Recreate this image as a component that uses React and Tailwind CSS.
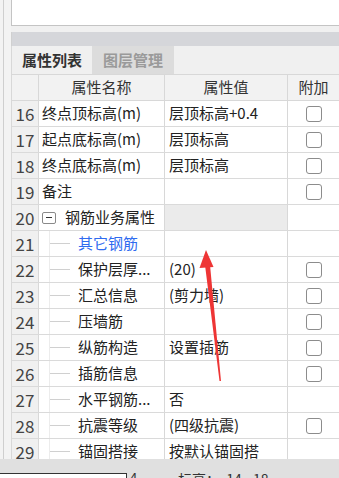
import React from "react";

const rows = [
  { n: 16, name: "终点顶标高(m)", val: "层顶标高+0.4", cb: true },
  { n: 17, name: "起点底标高(m)", val: "层顶标高", cb: true },
  { n: 18, name: "终点底标高(m)", val: "层顶标高", cb: true },
  { n: 19, name: "备注", val: "", cb: true },
  { n: 20, name: "钢筋业务属性", val: "", cb: false, group: true },
  { n: 21, name: "其它钢筋", val: "", cb: false, tree: true, blue: true },
  { n: 22, name: "保护层厚...", val: "(20)", cb: true, tree: true },
  { n: 23, name: "汇总信息", val: "(剪力墙)", cb: true, tree: true },
  { n: 24, name: "压墙筋", val: "", cb: true, tree: true },
  { n: 25, name: "纵筋构造", val: "设置插筋", cb: true, tree: true },
  { n: 26, name: "插筋信息", val: "", cb: true, tree: true },
  { n: 27, name: "水平钢筋...", val: "否", cb: false, tree: true },
  { n: 28, name: "抗震等级", val: "(四级抗震)", cb: true, tree: true },
  { n: 29, name: "锚固搭接", val: "按默认锚固搭", cb: false, tree: true },
];

const font = { fontFamily: '"Noto Sans CJK SC", "Noto Sans", sans-serif' };

function Checkbox() {
  return <div className="w-[16px] h-[16px] rounded-[3px] border border-[#8c8c8c] bg-white" />;
}

export default function App() {
  return (
    <div className="relative w-[339px] h-[478px] overflow-hidden bg-[#f0f0f0] text-[#222]" style={font}>
      <div className="flex h-[459px]">
        {/* left strip */}
        <div className="w-[11px] flex shrink-0 bg-[#f3f3f3]">
          <div className="w-[3px]" />
          <div className="w-px bg-[#cfcfcf]" />
        </div>
        {/* main */}
        <div className="flex-1 flex flex-col min-w-0">
          <div className="h-[26px] shrink-0 bg-white border-l border-b border-[#c4c4c4]" />
          <div className="h-[6px] shrink-0 bg-[#f0f0f0]" />
          <div className="h-[14px] shrink-0 bg-[#d5d6da] border-l border-[#d0d0d0]" />
          {/* tabs */}
          <div className="h-[28px] shrink-0 flex bg-[#f0f0f0] border-l border-[#d8d8d8]">
            <div className="w-[80px] flex items-center justify-center text-[15px] font-bold text-[#333] bg-[#f0f0f0]">
              属性列表
            </div>
            <div className="w-[82px] flex items-center justify-center text-[15px] font-bold text-[#9a9a9a] bg-[#dcdcdc]">
              图层管理
            </div>
          </div>
          {/* header */}
          <div className="h-[27px] shrink-0 flex bg-[#f2f2f2] border-l border-b border-t border-[#d8d8d8] text-[15px] text-[#333]">
            <div className="w-[27px] border-r border-[#d8d8d8]" />
            <div className="w-[126px] border-r border-[#d8d8d8] flex items-center justify-center">属性名称</div>
            <div className="w-[123px] border-r border-[#d8d8d8] flex items-center justify-center">属性值</div>
            <div className="flex-1 flex items-center justify-center">附加</div>
          </div>
          {/* rows */}
          <div className="flex flex-col border-l border-[#d8d8d8] bg-white">
            {rows.map((r) => (
              <div key={r.n} className="h-[26px] shrink-0 flex border-b border-[#dadada] text-[15px]">
                <div className="w-[27px] bg-[#f0f0f0] border-r border-[#d8d8d8] flex items-center justify-center text-[17px] text-[#444]">
                  {r.n}
                </div>
                <div className="relative w-[126px] border-r border-[#d8d8d8] flex items-center overflow-hidden whitespace-nowrap bg-white">
                  {r.group && (
                    <>
                      <div className="ml-[3px] w-[14px] h-[12px] border border-[#8a8a8a] rounded-[2px] bg-white flex items-center justify-center">
                        <div className="w-[6px] h-px bg-[#333]" />
                      </div>
                      <span className="ml-[9px]">{r.name}</span>
                    </>
                  )}
                  {r.tree && (
                    <>
                      <div className="absolute left-[10px] top-0 bottom-0 w-px bg-[#ececec]" />
                      <div className="ml-[11px] w-[20px] h-px bg-[#d0d0d0]" />
                      <span className={"ml-[8px] " + (r.blue ? "text-[#2f6bf0]" : "")}>{r.name}</span>
                    </>
                  )}
                  {!r.group && !r.tree && <span className="ml-[3px]">{r.name}</span>}
                </div>
                <div
                  className={
                    "w-[123px] border-r border-[#d8d8d8] flex items-center pl-[4px] overflow-hidden whitespace-nowrap " +
                    (r.group ? "bg-[#ebebeb]" : "bg-white")
                  }
                >
                  {r.val}
                </div>
                <div className="flex-1 flex items-center justify-center pl-[1px]">
                  {r.cb && <Checkbox />}
                </div>
              </div>
            ))}
          </div>
        </div>
      </div>
      {/* bottom bar */}
      <div className="relative h-[19px] bg-[#e0e0e0] overflow-hidden">
        <div className="absolute left-0 top-[14px] w-[127px] h-[10px] bg-white border-t border-r border-[#333]" />
        <div className="absolute left-[130px] top-[12px] text-[13px] leading-[14px] text-[#333]">4</div>
        <div className="absolute left-[178px] top-[12px] text-[14px] leading-[16px] text-[#333] whitespace-nowrap">
          标高：&nbsp; 14 - 18
        </div>
      </div>
      {/* red arrow overlay */}
      <svg className="absolute left-0 top-0 pointer-events-none" width="339" height="478" viewBox="0 0 339 478">
        <polygon points="206,250 199.5,268 213.5,267" fill="#ee3535" />
        <polygon points="205,265 210,265 221,381 219.5,381" fill="#ee3535" />
      </svg>
    </div>
  );
}
